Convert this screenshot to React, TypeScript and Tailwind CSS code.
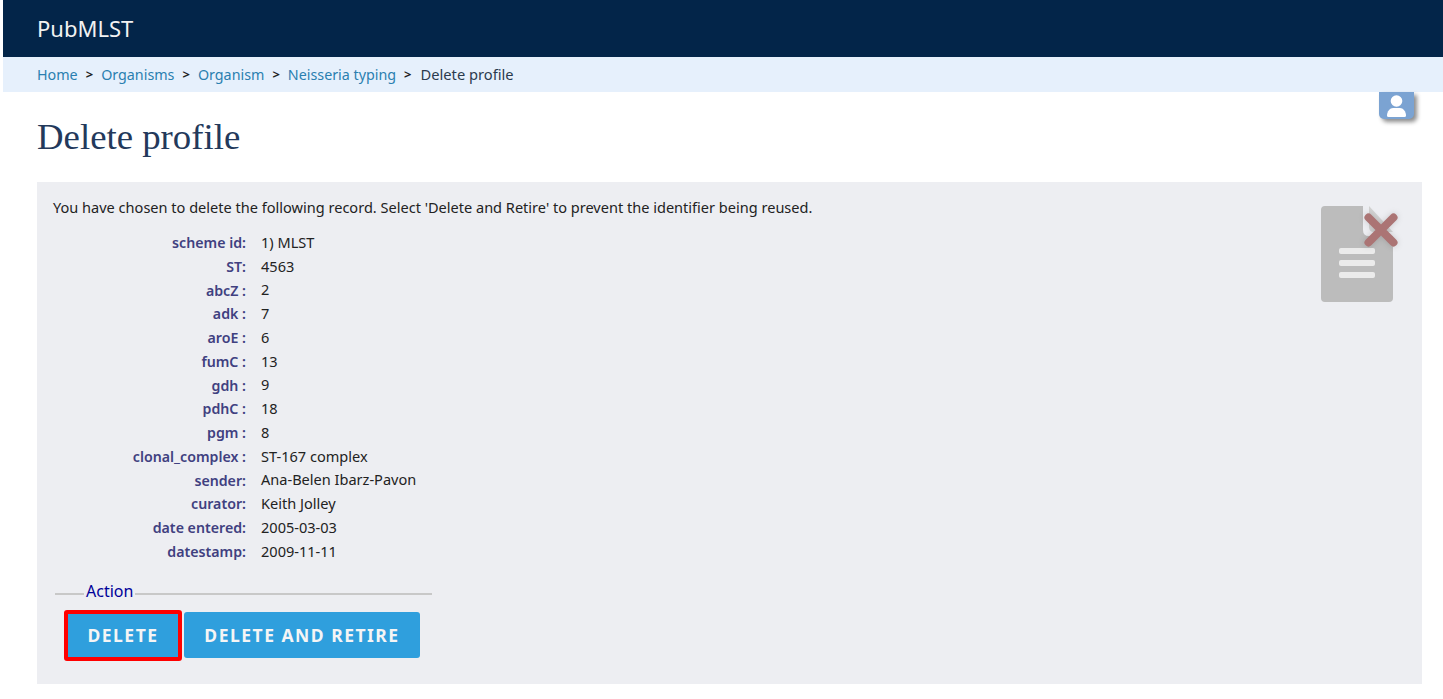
const rows: [string, string][] = [
  ["scheme id:", "1) MLST"],
  ["ST:", "4563"],
  ["abcZ :", "2"],
  ["adk :", "7"],
  ["aroE :", "6"],
  ["fumC :", "13"],
  ["gdh :", "9"],
  ["pdhC :", "18"],
  ["pgm :", "8"],
  ["clonal_complex :", "ST-167 complex"],
  ["sender:", "Ana-Belen Ibarz-Pavon"],
  ["curator:", "Keith Jolley"],
  ["date entered:", "2005-03-03"],
  ["datestamp:", "2009-11-11"],
];

const crumbs = ["Home", "Organisms", "Organism", "Neisseria typing"];

export default function App() {
  return (
    <div className="relative h-[699px] w-[1443px] overflow-hidden bg-white pl-[3px] font-['Noto_Sans',sans-serif] text-[14.55px] text-[#222]">
      <header className="flex h-[57px] items-center bg-[#032549] pl-[34px] text-[22px] text-[#f2f2f2]">PubMLST</header>
      <nav className="flex h-[35px] items-center bg-[#e6f0fc] pl-[34px] text-[14.3px]">
        {crumbs.map((c) => (
          <span key={c} className="flex items-center">
            <a className="text-[#2a7fb0]">{c}</a>
            <span className="mx-[8px] text-[13px] font-bold text-[#222]">&gt;</span>
          </span>
        ))}
        <span className="ml-[1px] text-[14.7px] text-[#2b3b4e]">Delete profile</span>
      </nav>

      <div className="absolute left-[1379px] top-[92px] flex h-[27px] w-[35px] items-center justify-center rounded-b-[5px] bg-[#7ba3d2] shadow-[3px_3px_4px_rgba(0,0,0,0.45)]">
        <svg viewBox="0 0 19 22" className="h-[22px] w-[19px]" fill="#fff">
          <circle cx="9.500" cy="6" r="5.800" />
          <path d="M0 20.500c0-4 3-7.500 6-7.500h7c3 0 6 3.500 6 7.500q0 1.500-1.500 1.500H1.500Q0 22 0 20.500z" />
        </svg>
      </div>

      <main className="px-[34px]">
        <h1 className="mt-[22px] h-[68px] font-['Liberation_Serif',serif] text-[36.8px] leading-[46px] text-[#23395b]">Delete profile</h1>
        <section className="relative h-[502px] w-[1385px] bg-[#edeef2] pl-[16px] pt-[15px]">
          <p className="h-[25px] leading-[20px]">You have chosen to delete the following record. Select 'Delete and Retire' to prevent the identifier being reused.</p>
          <svg viewBox="0 0 72 96" className="absolute left-[1284px] top-[24px] h-[96px] w-[72px] overflow-visible">
            <path d="M4 0h38v24q0 6 6 6h24v62q0 4-4 4H4q-4 0-4-4V4q0-4 4-4z" fill="#bcbcbc" />
            <path d="M48 0l24 26H53q-5 0-5-5z" fill="#d2d2d2" />
            <rect x="18" y="42" width="36" height="6" rx="2" fill="#ebebeb" />
            <rect x="18" y="54" width="36" height="6" rx="2" fill="#ebebeb" />
            <rect x="18" y="66" width="36" height="6" rx="2" fill="#ebebeb" />
            <path className="drop-shadow-[0_0_3px_rgba(0,0,0,0.15)]" d="M47.500 11.500l25 25M72.500 11.500l-25 25" stroke="#ab7474" strokeWidth="8" strokeLinecap="round" />
          </svg>
          <dl className="-ml-[1px] mt-[9px]">
            {rows.map(([k, v]) => (
              <div key={k} className="grid h-[23.75px] grid-cols-[194px_1fr] items-center gap-x-[15px]">
                <dt className="text-right text-[14.2px] font-semibold text-[#404080]">{k}</dt>
                <dd>{v}</dd>
              </div>
            ))}
          </dl>
          <fieldset className="ml-[2px] mt-[17px] w-[377px] border-t-2 border-[#c8c8c8]">
            <legend className="ml-[29px] px-[2px] pb-[6px] text-[16px] leading-[20px] text-[#000099]">Action</legend>
            <div className="ml-[9px] mt-[3px] flex items-center gap-[2px]">
              <button className="h-[51px] w-[118px] rounded-[3px] border-[4px] border-[#ff0000] bg-[#2f9fdd] text-[17.5px] font-bold tracking-[1.5px] text-[#f5f5f5]">DELETE</button>
              <button className="h-[46px] w-[236px] rounded-[3px] bg-[#2f9fdd] text-[17.5px] font-bold tracking-[1.5px] text-[#f5f5f5]">DELETE AND RETIRE</button>
            </div>
          </fieldset>
        </section>
      </main>
    </div>
  );
}
